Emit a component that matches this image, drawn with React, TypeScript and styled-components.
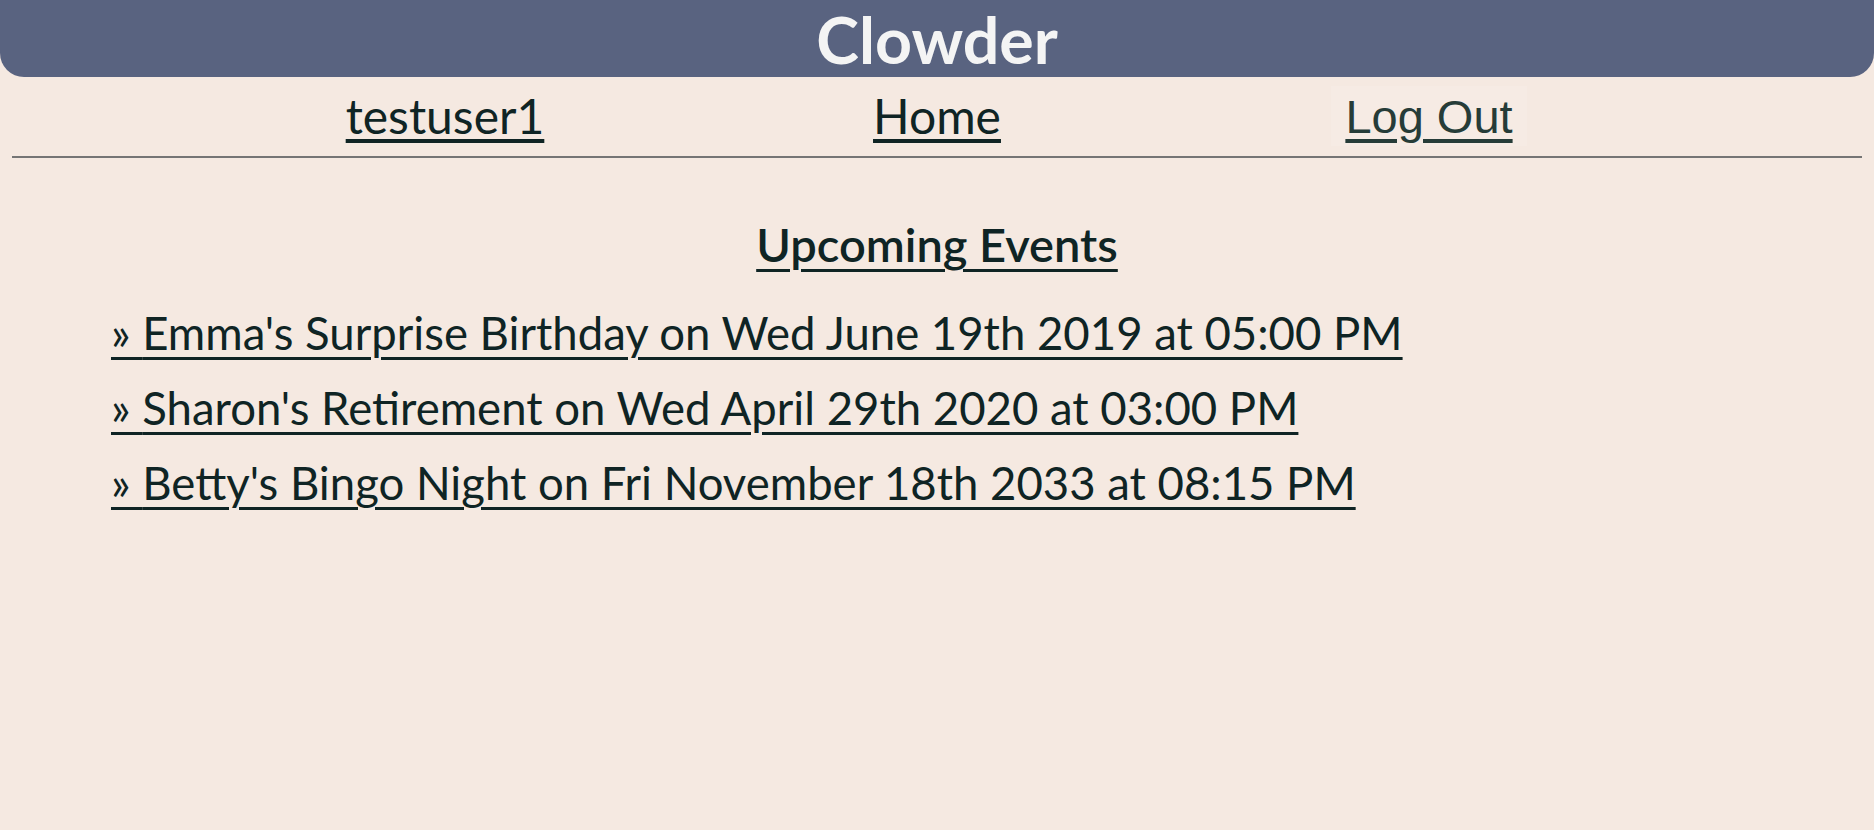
import React from "react";
import styled, { createGlobalStyle } from "styled-components";

const GlobalStyle = createGlobalStyle`
  html, body {
    margin: 0;
    padding: 0;
    background: #f5e9e1;
  }
  body {
    font-family: Lato, "Noto Sans", sans-serif;
    color: #0f2424;
  }
`;

const Page = styled.div`
  min-height: 830px;
  background: #f5e9e1;
`;

const Header = styled.header`
  box-sizing: border-box;
  height: 77px;
  padding-top: 1px;
  background: #596380;
  border-radius: 0 0 24px 24px;
  display: flex;
  justify-content: center;
  align-items: flex-start;
`;

const Title = styled.h1`
  margin: 0;
  font-family: Lato, sans-serif;
  font-weight: 700;
  font-size: 64.5px;
  line-height: 76px;
  color: #f4f4f4;
`;

const Nav = styled.nav`
  display: grid;
  grid-template-columns: repeat(3, 492px);
  justify-content: center;
  align-items: start;
  padding: 10px 0 10px;
`;

const NavCell = styled.div`
  display: flex;
  justify-content: center;
`;

const NavLink = styled.a`
  font-family: Lato, sans-serif;
  font-size: 48px;
  line-height: 58px;
  color: #0f2424;
  text-decoration: underline;
  text-decoration-thickness: 4px;
  text-underline-offset: 5px;
`;

const LogOutButton = styled.button`
  margin-top: -1px;
  padding: 5px 14px 3px;
  border: none;
  background: rgba(255, 255, 255, 0.12);
  font-family: "Liberation Sans", Arial, sans-serif;
  font-size: 47px;
  line-height: 52px;
  color: #263c38;
  text-decoration: underline;
  text-decoration-thickness: 4px;
  text-underline-offset: 6px;
  cursor: pointer;
`;

const Rule = styled.hr`
  margin: 0 12px;
  border: none;
  border-top: 2px solid #757575;
  height: 0;
`;

const Main = styled.main`
  padding-top: 60px;
`;

const SectionTitle = styled.h2`
  margin: 0;
  text-align: center;
  font-family: Lato, sans-serif;
  font-weight: 600;
  font-size: 47px;
  line-height: 52px;
  color: #0f2424;
  text-decoration: underline;
  text-decoration-thickness: 3px;
  text-underline-offset: 7px;
`;

const EventList = styled.ul`
  list-style: none;
  margin: 25px 0 0;
  padding: 0 0 0 111px;
`;

const EventItem = styled.li`
  font-family: Lato, sans-serif;
  font-size: 45.5px;
  line-height: 75px;
`;

const EventLink = styled.a`
  color: #0f2424;
  text-decoration: underline;
  text-decoration-thickness: 3px;
  text-underline-offset: 7px;
`;

const events = [
  "Emma's Surprise Birthday on Wed June 19th 2019 at 05:00 PM",
  "Sharon's Retirement on Wed April 29th 2020 at 03:00 PM",
  "Betty's Bingo Night on Fri November 18th 2033 at 08:15 PM",
];

export default function App() {
  return (
    <Page>
      <GlobalStyle />
      <Header>
        <Title>Clowder</Title>
      </Header>
      <Nav>
        <NavCell>
          <NavLink href="#">testuser1</NavLink>
        </NavCell>
        <NavCell>
          <NavLink href="#">Home</NavLink>
        </NavCell>
        <NavCell>
          <LogOutButton type="button">Log Out</LogOutButton>
        </NavCell>
      </Nav>
      <Rule />
      <Main>
        <SectionTitle>Upcoming Events</SectionTitle>
        <EventList>
          {events.map((e) => (
            <EventItem key={e}>
              <EventLink href="#">» {e}</EventLink>
            </EventItem>
          ))}
        </EventList>
      </Main>
    </Page>
  );
}
